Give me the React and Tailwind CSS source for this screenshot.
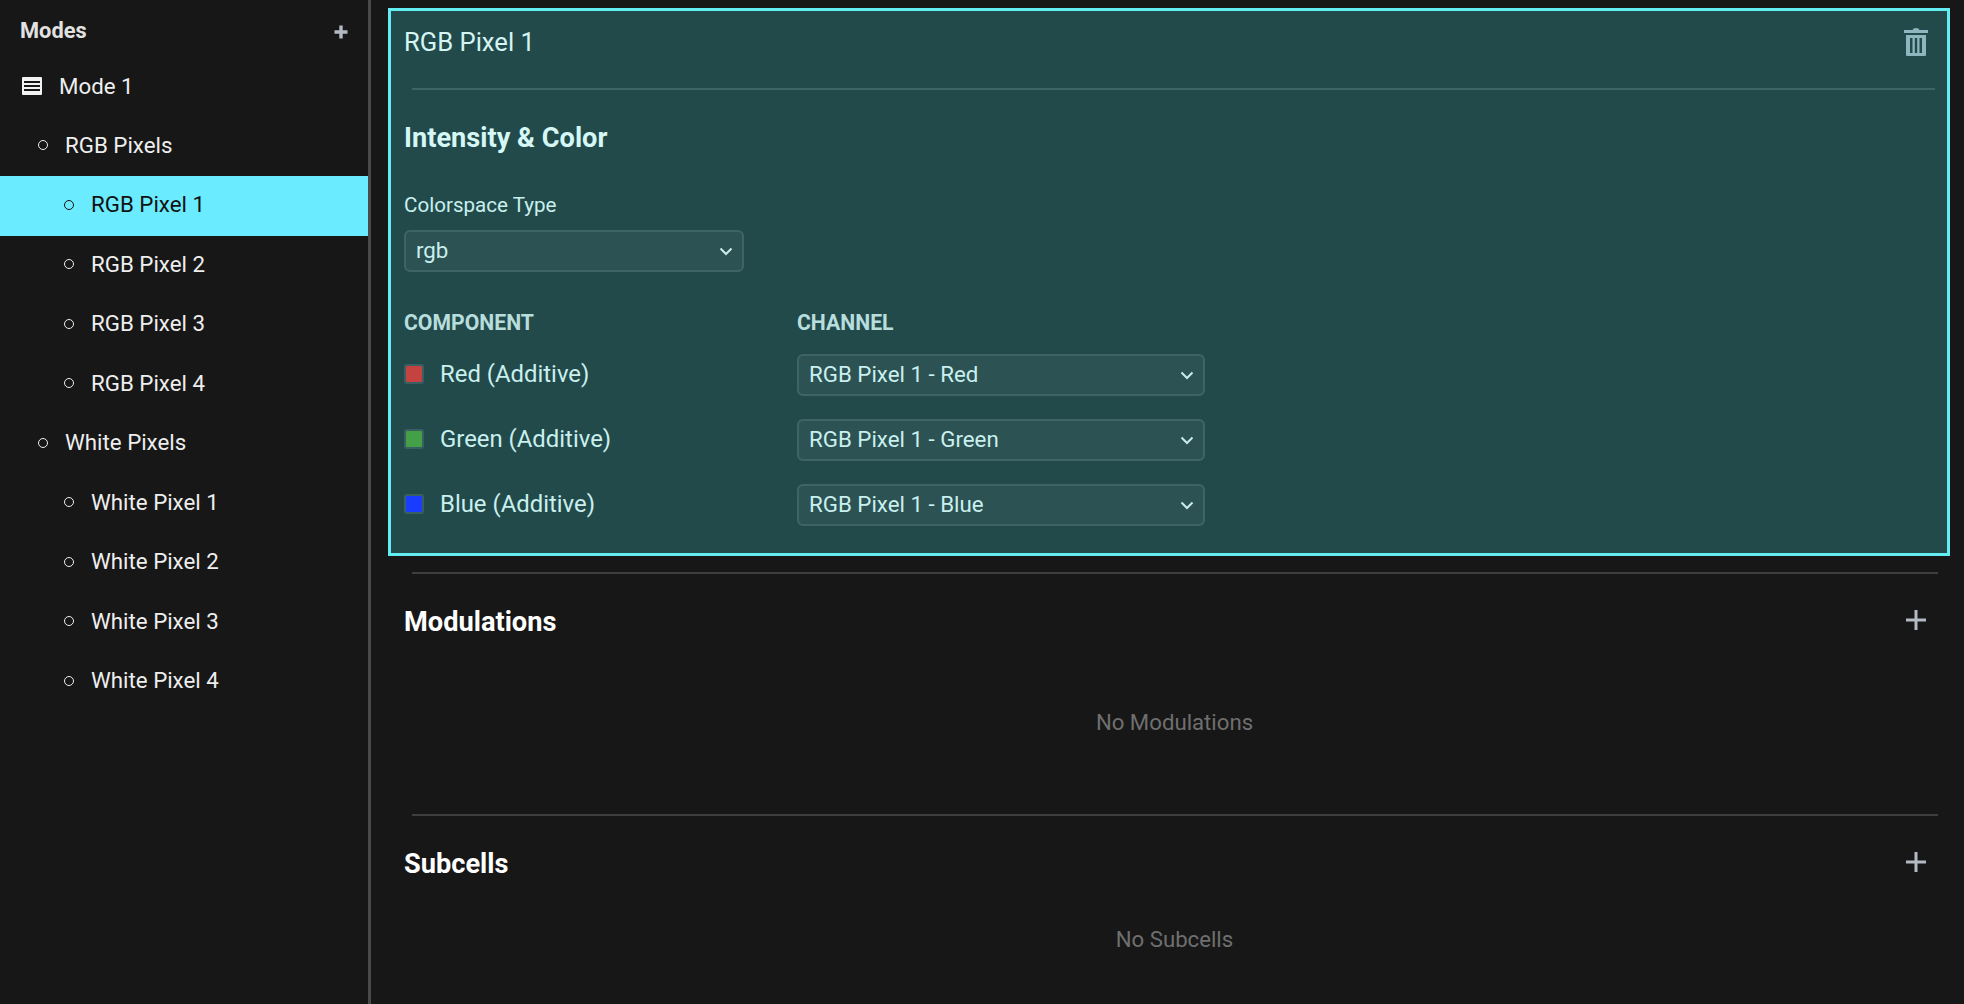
import React from 'react';

const font = { fontFamily: 'Roboto, sans-serif' };

const Ring = ({ dark }) => (
  <span className={`inline-block w-[10px] h-[10px] rounded-full border-[1.75px] ${dark ? 'border-[#111]' : 'border-[#eee]'}`}></span>
);

const TreeRow = ({ label, indent, active }) => (
  <div className={`flex items-center h-[59.5px] pb-[2px] text-[22.3px] ${indent} ${active ? 'bg-[#6bebff] text-[#111]' : 'text-[#eeeeee]'}`}>
    <Ring dark={active} />
    <span className="ml-[17px]">{label}</span>
  </div>
);

const Chevron = () => (
  <svg width="16" height="16" viewBox="0 0 16 16" className="ml-auto">
    <path d="M2.5 5.5 L8 11 L13.5 5.5" fill="none" stroke="#c9ecea" strokeWidth="2" />
  </svg>
);

const Select = ({ value, className }) => (
  <div className={`flex items-center h-[42px] pl-[10px] pr-[8px] rounded-[6px] border-2 border-[#3f6465] bg-[#2d5253] text-[22.3px] text-[#c9f0ee] ${className}`}>
    <span>{value}</span>
    <Chevron />
  </div>
);

const ChannelRow = ({ swatch, label, channel }) => (
  <div className="flex items-center h-[43px] mb-[22px] last:mb-0">
    <div className="w-[393px] flex items-center">
      <span className={`w-[20px] h-[20px] rounded-[3px] border-2 border-[#3a5f62] ${swatch}`}></span>
      <span className="ml-[16px] text-[23.9px] text-[#c9f0ee]">{label}</span>
    </div>
    <Select value={channel} className="w-[408px]" />
  </div>
);

const Plus = () => (
  <svg width="22" height="22" viewBox="0 0 22 22" className="-mt-[2px]">
    <path d="M11 1 V21 M1 11 H21" stroke="#b4b9c4" strokeWidth="3" />
  </svg>
);

const Section = ({ title, empty, emptyClass }) => (
  <div>
    <div className="ml-[24px] mr-[12px] h-[2px] bg-[#3e3e3e]"></div>
    <div className="flex items-center justify-between h-[96px] pl-[16px] pr-[23px] pb-[2px]">
      <h2 className="mt-[3px] text-[27.2px] font-bold text-white">{title}</h2>
      <Plus />
    </div>
    <div className={`text-center pl-[11px] text-[22.2px] text-[#6f6f6f] ${emptyClass}`}>{empty}</div>
  </div>
);

export default function App() {
  return (
    <div style={font} className="flex w-[1964px] h-[1004px] overflow-hidden bg-[#171717]">
      <aside className="w-[371px] shrink-0 border-r-[3px] border-[#4a4a4a]">
        <div className="flex items-center justify-between h-[56px] pt-[7px] pl-[20px] pr-[20px]">
          <span className="text-[21.8px] font-bold text-[#e2e2e2]">Modes</span>
          <svg width="14" height="14" viewBox="0 0 14 14">
            <path d="M7 0.5 V13.5 M0.5 7 H13.5" stroke="#b4b9c4" strokeWidth="3.4" />
          </svg>
        </div>
        <div className="flex items-center h-[60.5px] pl-[22px] text-[22.3px] text-[#eeeeee]">
          <svg width="20" height="18" viewBox="0 0 20 18">
            <path fillRule="evenodd" fill="#f2f2f2" d="M1 0 H19 A1 1 0 0 1 20 1 V17 A1 1 0 0 1 19 18 H1 A1 1 0 0 1 0 17 V1 A1 1 0 0 1 1 0 Z M2 4 V6 H18 V4 Z M2 8 V10 H18 V8 Z M2 12 V14 H18 V12 Z" />
          </svg>
          <span className="ml-[17px]">Mode 1</span>
        </div>
        <TreeRow label="RGB Pixels" indent="pl-[38px]" />
        <TreeRow label="RGB Pixel 1" indent="pl-[64px]" active />
        <TreeRow label="RGB Pixel 2" indent="pl-[64px]" />
        <TreeRow label="RGB Pixel 3" indent="pl-[64px]" />
        <TreeRow label="RGB Pixel 4" indent="pl-[64px]" />
        <TreeRow label="White Pixels" indent="pl-[38px]" />
        <TreeRow label="White Pixel 1" indent="pl-[64px]" />
        <TreeRow label="White Pixel 2" indent="pl-[64px]" />
        <TreeRow label="White Pixel 3" indent="pl-[64px]" />
        <TreeRow label="White Pixel 4" indent="pl-[64px]" />
      </aside>

      <main className="flex-1 pl-[17px] pr-[14px] pt-[8px]">
        <section className="h-[548px] border-[3px] border-[#63edf2] bg-[#234a4b] pl-[13px]">
          <div className="flex items-start justify-between h-[77px] pt-[12px] pr-[19px]">
            <span className="text-[25.6px] text-[#d5f5f3]">RGB Pixel 1</span>
            <svg width="24" height="28" viewBox="0 0 24 28" className="mt-[5px]">
              <path fill="#8db6bf" fillRule="evenodd" d="M8.5 2 Q9 0 12 0 Q15 0 15.5 2 H24 V5 H0 V2 Z M2 7 H22 V27 Q22 28 21 28 H3 Q2 28 2 27 Z M6 10 V25 H8.5 V10 Z M10.8 10 V25 H13.2 V10 Z M15.5 10 V25 H18 V10 Z" />
            </svg>
          </div>
          <div className="ml-[8px] mr-[12px] h-[2px] bg-[#3f6465]"></div>
          <h2 className="mt-[32px] text-[27.2px] leading-[32px] font-bold text-[#d5f8f6]">Intensity &amp; Color</h2>
          <div className="mt-[37px] text-[20.6px] leading-[28px] text-[#c9f0ee]">Colorspace Type</div>
          <Select value="rgb" className="w-[340px] mt-[11px]" />
          <div className="flex mt-[38px] text-[21.2px] leading-[26px] font-bold text-[#b7dedd]">
            <span className="w-[393px]">COMPONENT</span>
            <span>CHANNEL</span>
          </div>
          <div className="mt-[17px]">
            <ChannelRow swatch="bg-[#c4423f]" label="Red (Additive)" channel="RGB Pixel 1 - Red" />
            <ChannelRow swatch="bg-[#43a047]" label="Green (Additive)" channel="RGB Pixel 1 - Green" />
            <ChannelRow swatch="bg-[#1a3cff]" label="Blue (Additive)" channel="RGB Pixel 1 - Blue" />
          </div>
        </section>
        <div className="mt-[16px]">
          <Section title="Modulations" empty="No Modulations" emptyClass="h-[144px] pt-[36px]" />
          <Section title="Subcells" empty="No Subcells" emptyClass="pt-[11px]" />
        </div>
      </main>
    </div>
  );
}
